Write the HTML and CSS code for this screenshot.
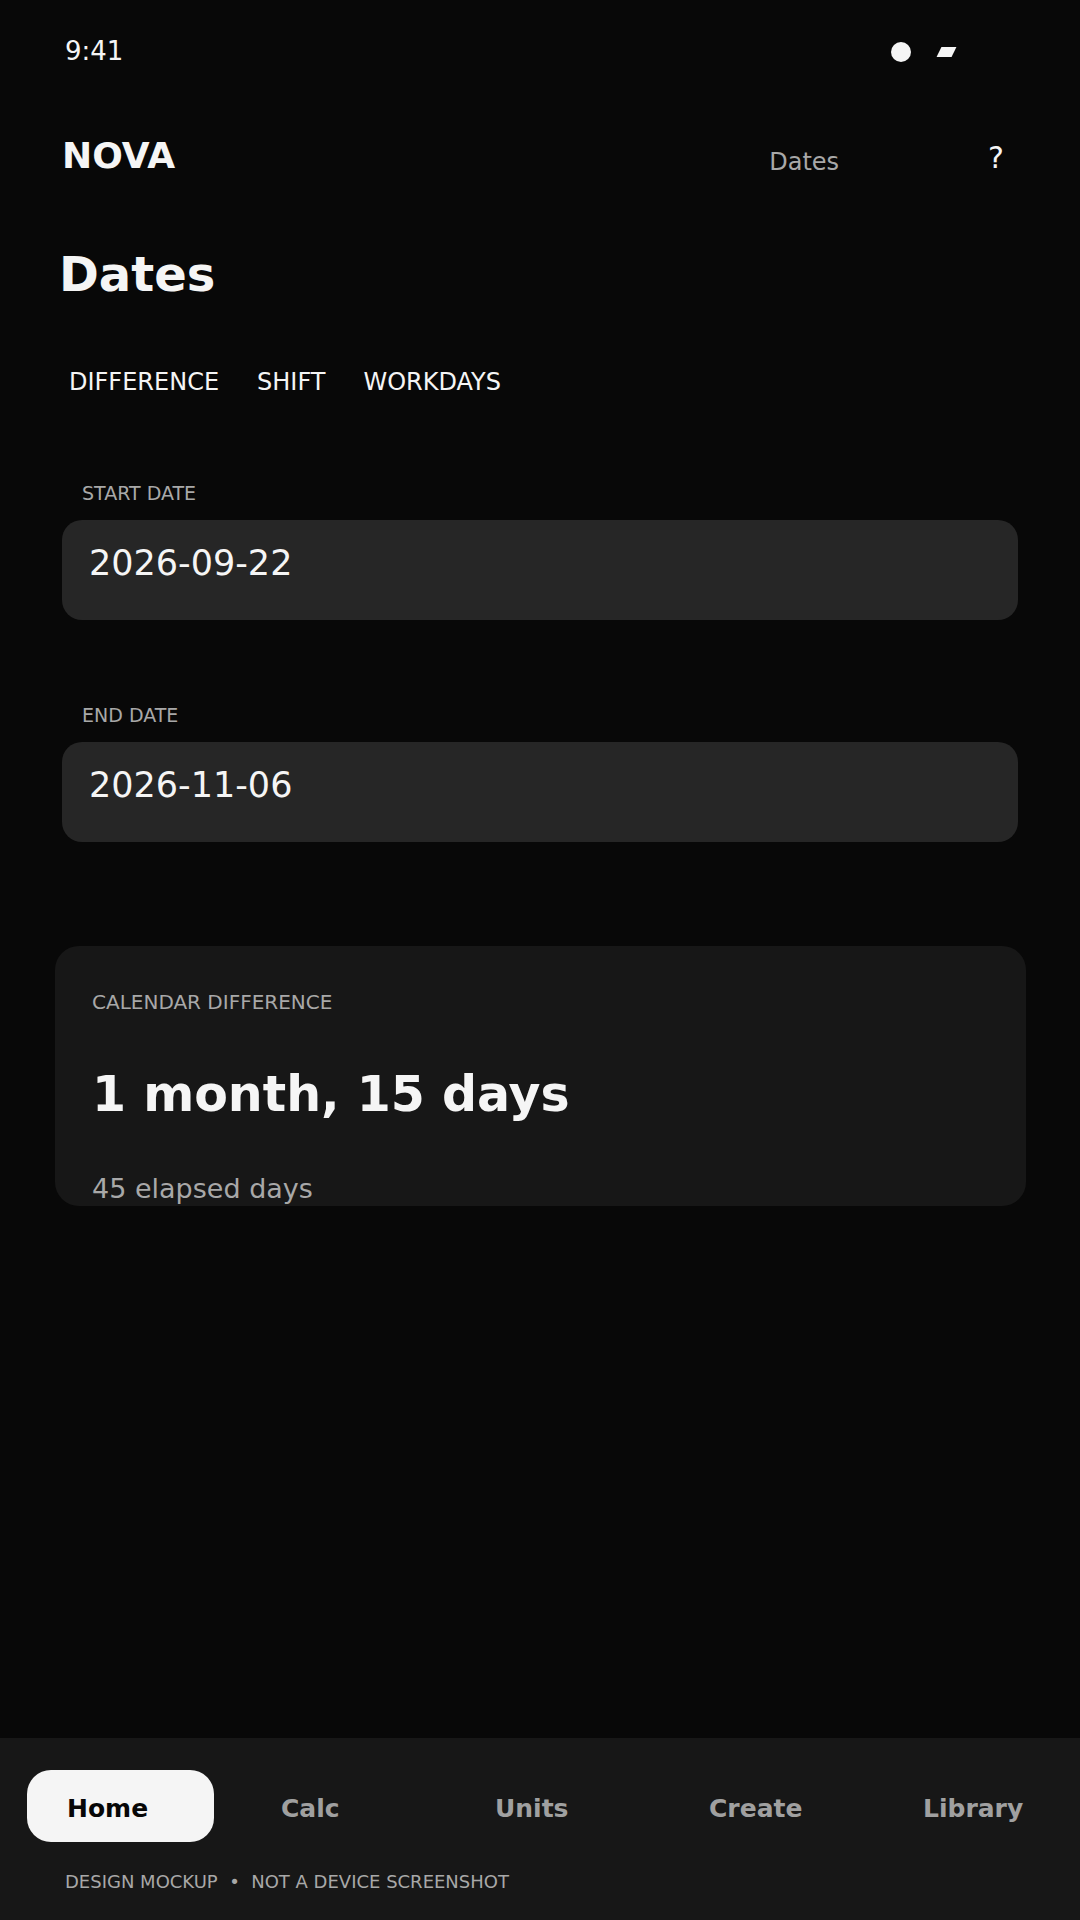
FILE: index.html
```html
<!DOCTYPE html>
<html lang="en">
<head>
    <meta charset="UTF-8">
    <meta name="viewport" content="width=device-width, initial-scale=1.0">
    <title>Dates</title>
    <link rel="stylesheet" href="styles.css">
</head>
<body>
    <div class="phone">
        <div class="status-bar">
            <span class="clock">9:41</span>
            <div class="status-icons">
                <span class="dot"></span>
                <span class="slant"></span>
            </div>
        </div>

        <header class="top-bar">
            <span class="brand">NOVA</span>
            <span class="crumb">Dates</span>
            <span class="help">?</span>
        </header>

        <h1 class="title">Dates</h1>

        <div class="tabs">
            <span>DIFFERENCE</span>
            <span>SHIFT</span>
            <span>WORKDAYS</span>
        </div>

        <div class="field">
            <div class="field-label">START DATE</div>
            <div class="field-box">2026-09-22</div>
        </div>

        <div class="field">
            <div class="field-label">END DATE</div>
            <div class="field-box">2026-11-06</div>
        </div>

        <section class="result">
            <div class="result-label">CALENDAR DIFFERENCE</div>
            <div class="result-value">1 month, 15 days</div>
            <div class="result-note">45 elapsed days</div>
        </section>

        <footer class="bottom">
            <nav class="nav">
                <a class="nav-item active">Home</a>
                <a class="nav-item">Calc</a>
                <a class="nav-item">Units</a>
                <a class="nav-item">Create</a>
                <a class="nav-item">Library</a>
            </nav>
            <div class="disclaimer">DESIGN MOCKUP &nbsp;•&nbsp; NOT A DEVICE SCREENSHOT</div>
        </footer>
    </div>
</body>
</html>
```

FILE: styles.css
```css
* {
    box-sizing: border-box;
}
body {
    margin: 0;
    background-color: #080808;
    font-family: "DejaVu Sans", sans-serif;
    color: #f5f5f5;
}
.phone {
    width: 1080px;
    height: 1920px;
    display: flex;
    flex-direction: column;
    overflow: hidden;
}

/* status bar */
.status-bar {
    height: 100px;
    padding: 2px 126px 0 65px;
    display: flex;
    align-items: center;
    justify-content: space-between;
}
.clock {
    font-size: 26px;
}
.status-icons {
    display: flex;
    align-items: center;
    gap: 28px;
    margin-top: 2px;
}
.dot {
    width: 20px;
    height: 20px;
    border-radius: 50%;
    background-color: #f5f5f5;
}
.slant {
    width: 15px;
    height: 10px;
    background-color: #f5f5f5;
    transform: skewX(-26deg);
}

/* header */
.top-bar {
    height: 112px;
    padding: 0 62px;
    display: flex;
    align-items: center;
}
.brand {
    margin-bottom: 2px;
    font-size: 36px;
    font-weight: bold;
}
.crumb {
    margin-left: auto;
    margin-top: 12px;
    font-size: 24px;
    color: #a8a8a8;
}
.help {
    margin-left: 149px;
    margin-right: 14px;
    margin-top: 2px;
    font-size: 30px;
}
.title {
    margin: 0;
    padding: 33px 59px 0;
    font-size: 48px;
    line-height: 58px;
}
.tabs {
    margin-top: 64px;
    padding: 0 69px;
    display: flex;
    gap: 38px;
    font-size: 24px;
    line-height: 30px;
}

/* date fields */
.field {
    margin: 0 62px;
}
.field-label {
    padding: 0 20px;
    margin-top: 85px;
    margin-bottom: 16px;
    font-size: 19px;
    line-height: 22px;
    color: #a8a8a8;
}
.field-box {
    height: 100px;
    padding: 22px 27px;
    background-color: #262626;
    border-radius: 20px;
    font-size: 35px;
    line-height: 42px;
}
.field + .field .field-label {
    margin-top: 84px;
}

/* result card */
.result {
    margin: 104px 54px 0 55px;
    height: 260px;
    padding: 44px 37px 0;
    background-color: #171717;
    border-radius: 24px;
    overflow: hidden;
}
.result-label {
    font-size: 20px;
    line-height: 24px;
    color: #a8a8a8;
}
.result-value {
    margin-top: 52px;
    font-size: 49px;
    font-weight: bold;
    line-height: 58px;
}
.result-note {
    margin-top: 49px;
    font-size: 27px;
    line-height: 32px;
    color: #a8a8a8;
}

/* bottom nav */
.bottom {
    margin-top: auto;
    height: 182px;
    background-color: #171717;
}
.nav {
    padding: 32px 0 0 27px;
    display: flex;
    gap: 27px;
}
.nav-item {
    flex: 0 0 187px;
    height: 72px;
    padding: 4px 0 0 40px;
    display: flex;
    align-items: center;
    border-radius: 24px;
    font-size: 25px;
    font-weight: bold;
    color: #a0a0a0;
}
.nav-item.active {
    background-color: #f5f5f5;
    color: #070707;
}
.disclaimer {
    margin-top: 29px;
    padding-left: 65px;
    font-size: 18px;
    line-height: 22px;
    color: #a8a8a8;
}
```
